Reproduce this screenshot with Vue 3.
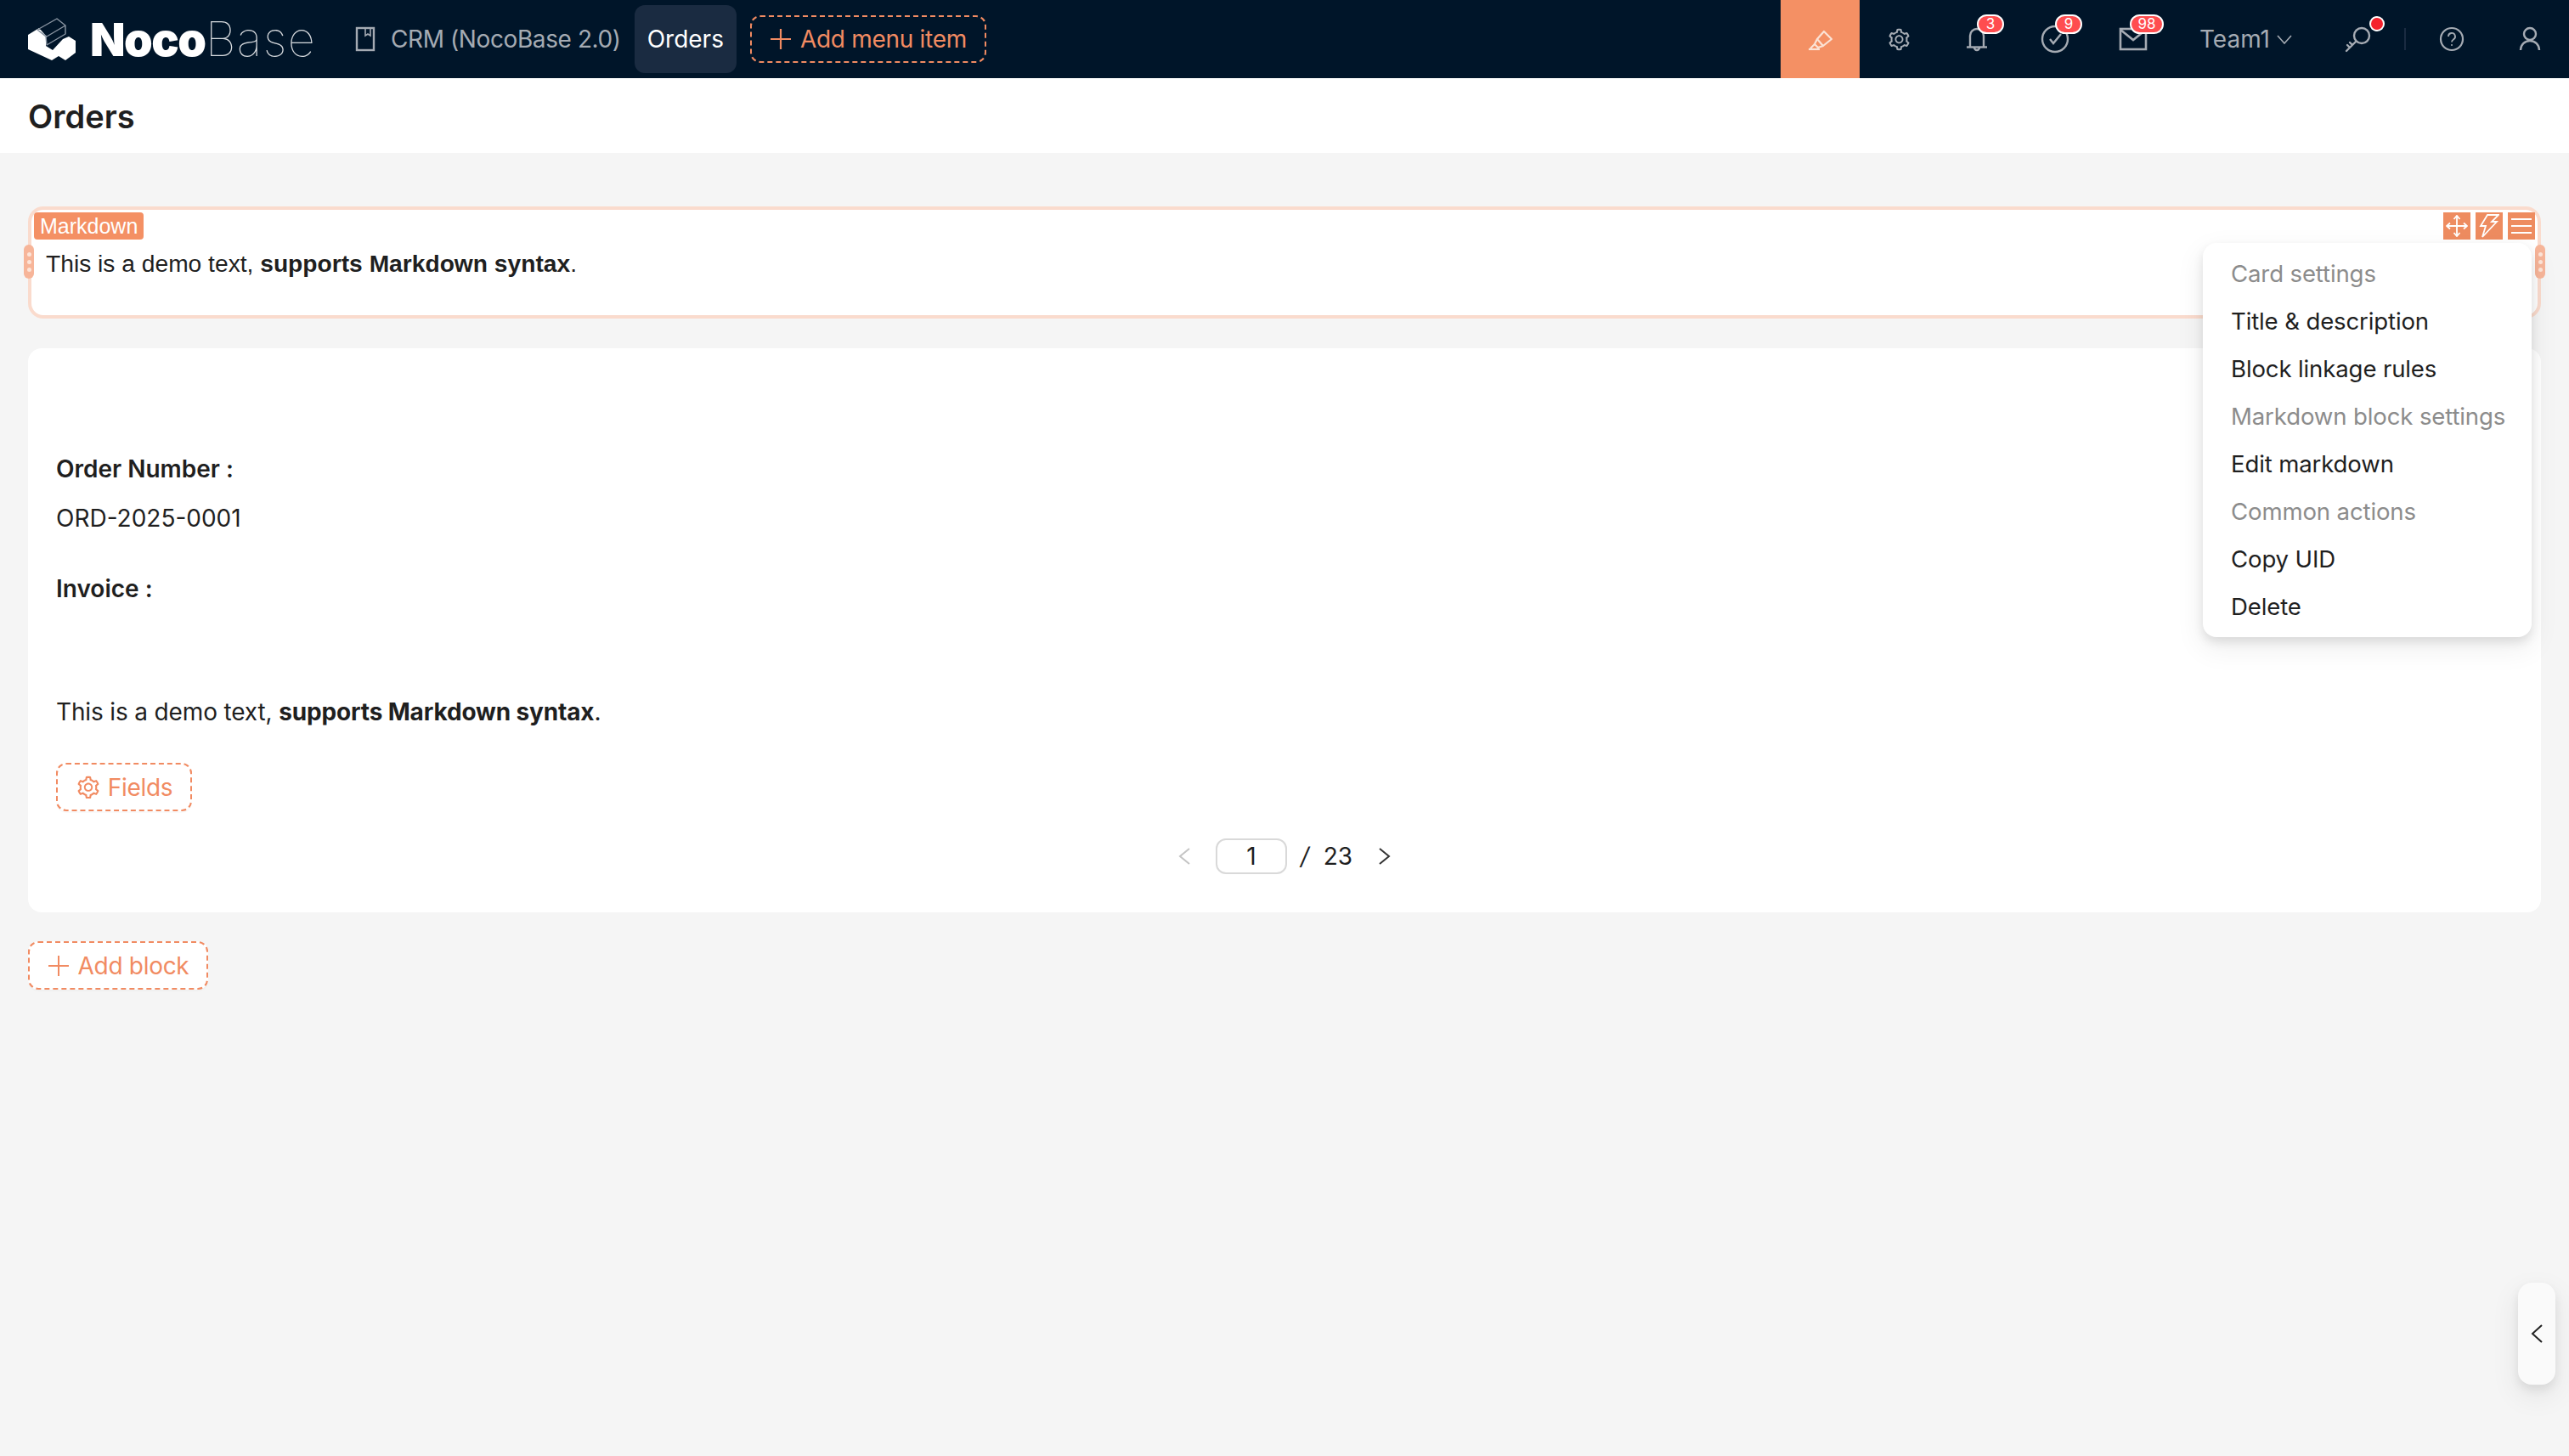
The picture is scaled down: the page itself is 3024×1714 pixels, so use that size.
<template>
  <div class="page">
    <header class="topbar">
      <div class="brand">
        <svg class="brand-mark" width="60" height="52" viewBox="0 0 60 52">
          <path d="M1 21 L14 13 L22 22 L22 34 L30 39 L42 26 L49 23 L57 28 L57 42 L45 51 L37 46 L29 51 L1 38 Z" fill="#fff"/>
          <path d="M12 15 L35 2 L45 10 L45 20 L23 33 L22 23 Z M12 15 L23 23 L45 10" fill="#001529" stroke="#8b96a3" stroke-width="1.4" stroke-linejoin="round"/>
        </svg>
        <span class="brand-noco">Noco</span><span class="brand-base">Base</span>
      </div>

      <nav class="nav">
        <div class="nav-item">
          <svg width="24" height="30" viewBox="0 0 24 30" fill="none" stroke="#a5abb3" stroke-width="2.4">
            <rect x="2" y="2" width="20" height="26"/>
            <path d="M12 2 v9 l3 -2 l3 2 v-9" stroke-width="1.6"/>
          </svg>
          <span>CRM (NocoBase 2.0)</span>
        </div>
        <div class="nav-item active">Orders</div>
        <button class="add-menu">
          <svg width="26" height="26" viewBox="0 0 26 26" stroke="currentColor" stroke-width="2.2">
            <path d="M13 1 V25 M1 13 H25"/>
          </svg>
          Add menu item
        </button>
      </nav>

      <div class="tools">
        <div class="tool tool-on">
          <svg width="30" height="30" viewBox="0 0 30 30" fill="none" stroke="#fbe3d6" stroke-width="2.2" stroke-linejoin="round">
            <path d="M19 6 L28 15 L18 23 L11 15 Z"/>
            <path d="M11 15 L8 21 L12 25 L18 23"/>
            <path d="M1 27 H14"/>
            <path d="M8 21 L3 26"/>
          </svg>
        </div>
        <div class="tool">
          <svg width="29" height="29" viewBox="0 0 1024 1024" fill="#a5abb3"><path :d="gearPath"/></svg>
        </div>
        <div class="tool">
          <svg width="26" height="34" viewBox="0 0 26 34" fill="none" stroke="#a5abb3" stroke-width="2.4">
            <path d="M5 26 V13 a8 8 0 0 1 16 0 V26"/>
            <path d="M1 26.5 H25"/>
            <path d="M10 27 a3 3 0 0 0 6 0"/>
          </svg>
          <span class="count">3</span>
        </div>
        <div class="tool">
          <svg width="34" height="34" viewBox="0 0 34 34" fill="none" stroke="#a5abb3" stroke-width="2.4">
            <circle cx="17" cy="17" r="15"/>
            <path d="M11 17 L15 22 L24 11"/>
          </svg>
          <span class="count">9</span>
        </div>
        <div class="tool">
          <svg width="34" height="28" viewBox="0 0 34 28" fill="none" stroke="#a5abb3" stroke-width="2.6">
            <rect x="2" y="2" width="30" height="24"/>
            <path d="M2 3 L17 15 L32 3"/>
          </svg>
          <span class="count two">98</span>
        </div>
        <div class="team">
          Team1
          <svg width="18" height="11" viewBox="0 0 18 11" fill="none" stroke="#a5abb3" stroke-width="1.6"><path d="M1 1 L9 10 L17 1"/></svg>
        </div>
        <div class="tool">
          <svg width="34" height="34" viewBox="0 0 34 34" fill="none" stroke="#a5abb3" stroke-width="2.4" stroke-linecap="round">
            <circle cx="21" cy="13" r="9"/>
            <path d="M14 20 L3 31 M7 27 L4 24 M10 24 L7 21"/>
          </svg>
          <span class="dot"></span>
        </div>
        <span class="divider"></span>
        <div class="tool">
          <svg width="30" height="30" viewBox="0 0 30 30" fill="none" stroke="#a5abb3" stroke-width="2.2">
            <circle cx="15" cy="15" r="13"/>
            <path d="M11 12 a4 4 0 1 1 6 3.4 c-1.4 .9 -2 1.6 -2 3.1" stroke-width="1.8"/>
            <circle cx="15" cy="22" r="1" fill="#a5abb3" stroke="none"/>
          </svg>
        </div>
        <div class="tool">
          <svg width="26" height="30" viewBox="0 0 26 30" fill="none" stroke="#a5abb3" stroke-width="2.4">
            <circle cx="13" cy="9" r="7"/>
            <path d="M2 28 a11 11 0 0 1 22 0"/>
          </svg>
        </div>
      </div>
    </header>

    <div class="title-bar">Orders</div>

    <main class="content">
      <section class="md-card">
        <span class="md-tag">Markdown</span>
        <p class="md-text">This is a demo text, <b>supports Markdown syntax</b>.</p>

        <span class="grip grip-left"><i></i><i></i><i></i></span>
        <span class="grip grip-right"><i></i><i></i><i></i></span>

        <div class="block-tools">
          <span class="block-tool">
            <svg width="26" height="26" viewBox="0 0 26 26" fill="none" stroke="#fff" stroke-width="1.8">
              <path d="M13 1 V25 M1 13 H25"/>
              <path d="M9.5 5 L13 1 L16.5 5 M9.5 21 L13 25 L16.5 21 M5 9.5 L1 13 L5 16.5 M21 9.5 L25 13 L21 16.5"/>
            </svg>
          </span>
          <span class="block-tool">
            <svg width="24" height="28" viewBox="0 0 24 28" fill="none" stroke="#fff" stroke-width="1.8" stroke-linejoin="miter">
              <path d="M10 1 H23 L15 9 H21 L4 27 L8 14 H2 Z"/>
            </svg>
          </span>
          <span class="block-tool">
            <svg width="24" height="20" viewBox="0 0 24 20" stroke="#fff" stroke-width="1.8"><path d="M0 2 H24 M0 10 H24 M0 18 H24"/></svg>
          </span>
        </div>

        <ul class="menu">
          <li v-for="item in menuItems" :key="item.label" :class="{ group: item.group }">{{ item.label }}</li>
        </ul>
      </section>

      <section class="detail-card">
        <label class="field-label">Order Number :</label>
        <div class="field-value">ORD-2025-0001</div>
        <label class="field-label invoice">Invoice :</label>
        <p class="detail-md">This is a demo text, <b>supports Markdown syntax</b>.</p>

        <button class="dashed-btn fields-btn">
          <svg width="30" height="30" viewBox="0 0 1024 1024" fill="currentColor"><path :d="gearPath"/></svg>
          Fields
        </button>

        <div class="pager">
          <svg width="14" height="22" viewBox="0 0 14 22" fill="none" stroke="#c4c4c4" stroke-width="2"><path d="M13 2 L2 11 L13 20"/></svg>
          <span class="pager-input">1</span>
          <span class="pager-total"><em>/</em> 23</span>
          <svg width="14" height="22" viewBox="0 0 14 22" fill="none" stroke="#333" stroke-width="2"><path d="M1 2 L12 11 L1 20"/></svg>
        </div>
      </section>

      <button class="dashed-btn add-block">
        <svg width="26" height="26" viewBox="0 0 26 26" stroke="currentColor" stroke-width="2"><path d="M13 1 V25 M1 13 H25"/></svg>
        Add block
      </button>
    </main>

    <div class="side-toggle">
      <svg width="14" height="22" viewBox="0 0 14 22" fill="none" stroke="#222" stroke-width="2"><path d="M13 1 L2 11 L13 21"/></svg>
    </div>
  </div>
</template>

<script setup>
const gearPath = 'M924.8 625.7l-65.5-56c3.1-19 4.7-38.4 4.7-57.8s-1.6-38.8-4.7-57.8l65.5-56a32.03 32.03 0 0 0 9.3-35.2l-.9-2.6a443.74 443.74 0 0 0-79.7-137.9l-1.8-2.1a32.12 32.12 0 0 0-35.1-9.5l-81.3 28.9c-30-24.6-63.5-44-99.7-57.6l-15.7-85a32.05 32.05 0 0 0-25.8-25.7l-2.7-.5c-52.1-9.4-106.9-9.4-159 0l-2.7.5a32.05 32.05 0 0 0-25.8 25.7l-15.8 85.4a351.86 351.86 0 0 0-99 57.4l-81.9-29.1a32 32 0 0 0-35.1 9.5l-1.8 2.1a446.02 446.02 0 0 0-79.7 137.9l-.9 2.6c-4.5 12.5-.8 26.5 9.3 35.2l66.3 56.6c-3.1 18.8-4.6 38-4.6 57.1 0 19.2 1.5 38.4 4.6 57.1L99 625.5a32.03 32.03 0 0 0-9.3 35.2l.9 2.6c18.1 50.4 44.9 96.9 79.7 137.9l1.8 2.1a32.12 32.12 0 0 0 35.1 9.5l81.9-29.1c29.8 24.5 63.1 43.9 99 57.4l15.8 85.4a32.05 32.05 0 0 0 25.8 25.7l2.7.5a449.4 449.4 0 0 0 159 0l2.7-.5a32.05 32.05 0 0 0 25.8-25.7l15.7-85a350 350 0 0 0 99.7-57.6l81.3 28.9a32 32 0 0 0 35.1-9.5l1.8-2.1c34.8-41.1 61.6-87.5 79.7-137.9l.9-2.6c4.5-12.3.8-26.3-9.3-35zM788.3 465.9c2.5 15.1 3.8 30.6 3.8 46.1s-1.3 31-3.8 46.1l-6.6 40.1 74.7 63.9a370.03 370.03 0 0 1-42.6 73.6L721 702.8l-31.4 25.8c-23.9 19.6-50.5 35-79.3 45.8l-38.1 14.3-17.9 97a377.5 377.5 0 0 1-85 0l-17.9-97.2-37.8-14.5c-28.5-10.8-55-26.2-78.7-45.7l-31.4-25.9-93.4 33.2c-17-22.9-31.2-47.6-42.6-73.6l75.5-64.5-6.5-40c-2.4-14.9-3.7-30.3-3.7-45.5 0-15.3 1.2-30.6 3.7-45.5l6.5-40-75.5-64.5c11.3-26.1 25.6-50.7 42.6-73.6l93.4 33.2 31.4-25.9c23.7-19.5 50.2-34.9 78.7-45.7l37.9-14.3 17.9-97.2c28.1-3.2 56.8-3.2 85 0l17.9 97 38.1 14.3c28.7 10.8 55.4 26.2 79.3 45.8l31.4 25.8 92.8-32.9c17 22.9 31.2 47.6 42.6 73.6L781.8 426l6.5 39.9zM512 326c-97.2 0-176 78.8-176 176s78.8 176 176 176 176-78.8 176-176-78.8-176-176-176zm79.2 255.2A111.6 111.6 0 0 1 512 614c-29.9 0-58-11.7-79.2-32.8A111.6 111.6 0 0 1 400 502c0-29.9 11.7-58 32.8-79.2C454 401.6 482.1 390 512 390c29.9 0 58 11.6 79.2 32.8A111.6 111.6 0 0 1 624 502c0 29.9-11.7 58-32.8 79.2z'

const menuItems = [
  { label: 'Card settings', group: true },
  { label: 'Title & description' },
  { label: 'Block linkage rules' },
  { label: 'Markdown block settings', group: true },
  { label: 'Edit markdown' },
  { label: 'Common actions', group: true },
  { label: 'Copy UID' },
  { label: 'Delete' }
]
</script>

<style>
html,
body {
  margin: 0;
  background: #f5f5f5;
}
</style>

<style scoped>
.page {
  position: relative;
  height: 1714px;
  overflow: hidden;
  background: #f5f5f5;
  font-family: Inter, "Liberation Sans", sans-serif;
  font-size: 28px;
  color: #1f1f1f;
}

.topbar {
  display: flex;
  align-items: center;
  height: 92px;
  background: #001529;
}

.brand {
  display: flex;
  align-items: center;
  width: 400px;
  padding-left: 32px;
  box-sizing: border-box;
  color: #fff;
  flex-shrink: 0;
}

.brand-mark {
  margin-right: 14px;
}

.brand-noco {
  font-size: 54px;
  font-weight: 900;
  letter-spacing: -1.5px;
}

.brand-base {
  font-size: 56px;
  font-weight: 100;
  letter-spacing: 1.4px;
  color: #d6dade;
}

.nav {
  display: flex;
  align-items: center;
  flex: 1;
  margin-left: 18px;
}

.nav-item {
  display: flex;
  align-items: center;
  gap: 18px;
  color: #a5abb3;
  white-space: nowrap;
  letter-spacing: -0.4px;
}

.nav-item.active {
  height: 80px;
  margin-left: 16px;
  padding: 0 15px;
  background: #1a2b41;
  color: #fff;
  border-radius: 12px;
  letter-spacing: 0;
}

.add-menu {
  display: flex;
  align-items: center;
  justify-content: center;
  gap: 10px;
  width: 278px;
  height: 56px;
  margin-left: 16px;
  padding: 0;
  background: none;
  border: 2px dashed #f18b62;
  border-radius: 12px;
  color: #f18b62;
  font: inherit;
  letter-spacing: -0.3px;
}

.tools {
  display: flex;
  align-items: center;
  height: 92px;
  flex-shrink: 0;
}

.tool {
  position: relative;
  display: flex;
  align-items: center;
  justify-content: center;
  width: 92px;
  height: 92px;
}

.tool-on {
  background: #f49064;
  width: 93px;
}

.count {
  position: absolute;
  top: 17px;
  left: 46px;
  box-sizing: border-box;
  width: 32px;
  height: 23px;
  background: #ff4d4f;
  border: 2px solid #fff;
  border-radius: 12px;
  color: #fff;
  font-size: 17px;
  line-height: 19px;
  text-align: center;
}

.count.two {
  left: 42px;
  width: 40px;
}

.team {
  display: flex;
  align-items: center;
  justify-content: center;
  gap: 8px;
  width: 173px;
  color: #a5abb3;
  white-space: nowrap;
}

.dot {
  position: absolute;
  top: 21px;
  left: 61px;
  width: 14px;
  height: 14px;
  background: #f5222d;
  border-radius: 50%;
  box-shadow: 0 0 0 2px #fff;
}

.divider {
  width: 2px;
  height: 26px;
  margin: 0 8px;
  background: #1a2b41;
}

.title-bar {
  height: 88px;
  padding-left: 33px;
  background: #fff;
  font-size: 38px;
  font-weight: 600;
  line-height: 90px;
}

.content {
  display: flex;
  flex-direction: column;
  align-items: flex-start;
  padding: 63px 33px 0;
}

.md-card {
  position: relative;
  box-sizing: border-box;
  width: 100%;
  height: 132px;
  padding: 3px 17px;
  background: #fff;
  border: 4px solid #fadbcd;
  border-radius: 18px;
}

.md-tag {
  display: inline-block;
  margin-left: -14px;
  padding: 0 7px;
  background: #f49064;
  border-radius: 4px;
  color: #fff;
  font-family: "Liberation Sans", sans-serif;
  font-size: 25px;
  line-height: 32px;
  vertical-align: top;
}

.md-text {
  margin: 8px 0 0;
  font-family: "Liberation Sans", sans-serif;
  font-size: 28.2px;
  line-height: 36px;
}

.grip {
  position: absolute;
  top: 41px;
  display: flex;
  flex-direction: column;
  align-items: center;
  justify-content: center;
  gap: 4px;
  width: 12px;
  height: 40px;
  background: #f7b599;
  border-radius: 6px;
}

.grip i {
  width: 5px;
  height: 5px;
  background: #fde4d8;
  border-radius: 50%;
}

.grip-left {
  left: -9px;
}

.grip-right {
  right: -9px;
}

.block-tools {
  position: absolute;
  top: 3px;
  right: 3px;
  display: flex;
  gap: 6px;
}

.block-tool {
  display: flex;
  align-items: center;
  justify-content: center;
  width: 32px;
  height: 32px;
  background: #ee8c60;
}

.menu {
  position: absolute;
  top: 39px;
  right: 7px;
  z-index: 2;
  width: 387px;
  box-sizing: border-box;
  margin: 0;
  padding: 8px;
  list-style: none;
  background: #fff;
  border-radius: 16px;
  box-shadow: 0 12px 32px 4px rgba(0, 0, 0, 0.06), 0 6px 12px rgba(0, 0, 0, 0.1);
}

.menu li {
  height: 56px;
  padding-left: 25px;
  font-size: 27.6px;
  letter-spacing: -0.15px;
  line-height: 56px;
  white-space: nowrap;
}

.menu li.group {
  color: #8c8c8c;
}

.detail-card {
  box-sizing: border-box;
  width: 100%;
  height: 664px;
  margin-top: 35px;
  padding: 120px 33px 0;
  background: #fff;
  border-radius: 16px;
}

.field-label {
  display: block;
  font-weight: 600;
  line-height: 44px;
}

.field-value {
  margin-top: 14px;
  line-height: 44px;
}

.invoice {
  margin-top: 39px;
}

.detail-md {
  margin: 105px 0 0;
  line-height: 36px;
  letter-spacing: -0.15px;
}

.dashed-btn {
  display: flex;
  align-items: center;
  gap: 8px;
  padding: 0;
  background: #fff;
  border: 2px dashed #f18b62;
  border-radius: 12px;
  box-shadow: 0 2px 0 rgba(0, 0, 0, 0.02);
  color: #f18b62;
  font: inherit;
  box-sizing: border-box;
}

.fields-btn {
  justify-content: center;
  width: 160px;
  height: 57px;
  margin-top: 42px;
  gap: 8px;
  letter-spacing: -0.3px;
}

.pager {
  display: flex;
  align-items: center;
  justify-content: center;
  gap: 16px;
  height: 44px;
  margin-top: 31px;
}

.pager-input {
  width: 84px;
  height: 42px;
  margin-left: 14px;
  border: 2px solid #d9d9d9;
  border-radius: 12px;
  box-sizing: border-box;
  text-align: center;
  line-height: 38px;
}

.pager-total {
  margin-right: 15px;
}

.pager-total em {
  margin-right: 9px;
}

.add-block {
  justify-content: center;
  width: 212px;
  height: 57px;
  margin-top: 34px;
  gap: 10px;
  letter-spacing: -0.3px;
}

.side-toggle {
  position: absolute;
  top: 1510px;
  right: 16px;
  display: flex;
  align-items: center;
  justify-content: center;
  width: 44px;
  height: 120px;
  background: #fafafa;
  border-radius: 16px;
  box-shadow: 0 12px 32px 4px rgba(0, 0, 0, 0.06), 0 6px 12px rgba(0, 0, 0, 0.08);
}
</style>
